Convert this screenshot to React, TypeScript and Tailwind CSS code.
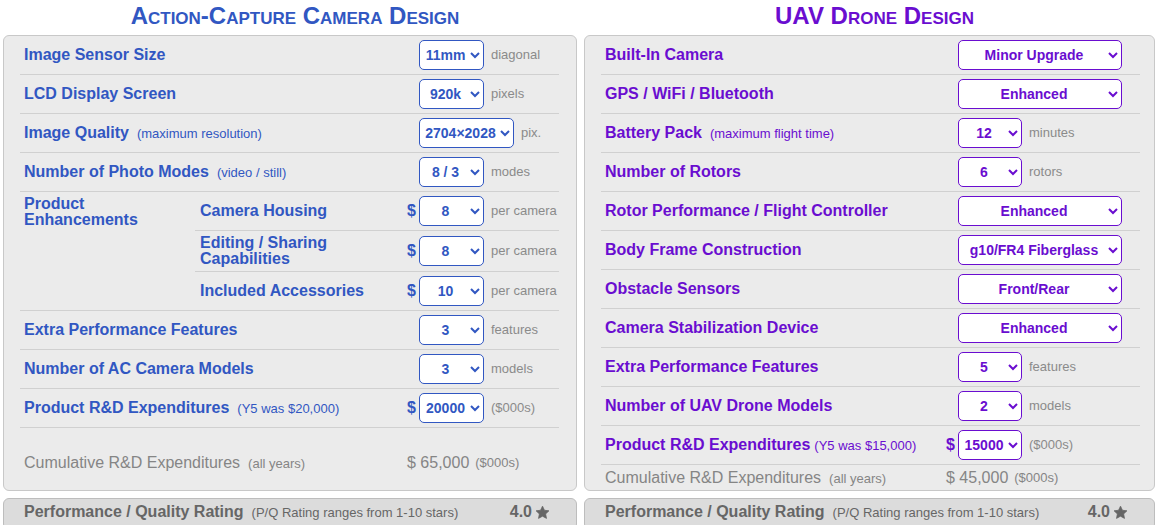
import React from 'react';

type Theme = { text: string; border: string };

const BLUE: Theme = { text: 'text-[#3157c2]', border: 'border-[#3157c2]' };
const PURPLE: Theme = { text: 'text-[#6a0dd0]', border: 'border-[#6a0dd0]' };

function Picker({ value, width, theme }: { value: string; width: string; theme: Theme }) {
    return (
        <select
            defaultValue={value}
            className={`h-[30px] ${width} rounded-[5px] border ${theme.border} bg-white text-[14px] font-bold ${theme.text} [text-align-last:center] outline-none`}
        >
            <option value={value}>{value}</option>
        </select>
    );
}

type RowProps = {
    label: string;
    note?: string;
    value: string;
    unit?: string;
    dollar?: boolean;
    selWidth: string;
    labelWidth: string;
    theme: Theme;
    noteGap?: string;
    height?: string;
    border?: boolean;
    labelPad?: string;
};

function Row({ label, note, value, unit, dollar, selWidth, labelWidth, theme, noteGap = 'ml-2', height = 'h-[39px]', border = true, labelPad = 'pl-1' }: RowProps) {
    return (
        <div className={`flex items-center ${height} ${border ? 'border-b border-[#d0d0d0]' : ''}`}>
            <div className={`${labelWidth} ${labelPad} shrink-0 leading-4`}>
                <span className={`text-[16px] font-bold ${theme.text}`}>{label}</span>
                {note && <span className={`${noteGap} text-[13px] ${theme.text}`}>{note}</span>}
            </div>
            <div className={`w-[12px] shrink-0 text-[16px] font-bold ${theme.text}`}>{dollar ? '$' : ''}</div>
            <Picker value={value} width={selWidth} theme={theme} />
            {unit && <span className="ml-[7px] text-[13px] text-[#8a8a8a]">{unit}</span>}
        </div>
    );
}

function Star() {
    return (
        <svg width="15" height="15" viewBox="0 0 24 24" className="ml-[3px] inline-block">
            <path
                d="M12 1.8l3.1 6.6 7.2.9-5.3 5 1.4 7.1L12 17.9l-6.4 3.5 1.4-7.1-5.3-5 7.2-.9z"
                fill="#666666"
                stroke="#666666"
                strokeWidth="1.2"
                strokeLinejoin="round"
            />
        </svg>
    );
}

function RatingBar() {
    return (
        <div className="mt-[7px] flex h-[32px] items-start rounded-md border border-[#bdbdbd] bg-[#dcdcdc] pt-[4px] pl-5 pr-[26px] leading-[18px] text-[#666666]">
            <span className="text-[16px] font-bold">Performance / Quality Rating</span>
            <span className="ml-2 pt-[1px] text-[13px]">(P/Q Rating ranges from 1-10 stars)</span>
            <span className="ml-auto flex items-center text-[16px] font-bold">
                4.0
                <Star />
            </span>
        </div>
    );
}

function CameraPanel() {
    const t = BLUE;
    const lw = 'w-[387px]';
    return (
        <div>
            <h2 className={`flex h-[35px] items-center justify-center pl-[10px] pb-[4px] text-[24px] font-bold [font-variant:small-caps] ${t.text}`}>
                Action-Capture Camera Design
            </h2>
            <div className="flex h-[456px] flex-col rounded-md border border-[#c8c8c8] bg-[#ebebeb] pl-4 pr-[17px]">
                <Row label="Image Sensor Size" value="11mm" unit="diagonal" selWidth="w-[65px]" labelWidth={lw} theme={t} />
                <Row label="LCD Display Screen" value="920k" unit="pixels" selWidth="w-[65px]" labelWidth={lw} theme={t} />
                <Row label="Image Quality" note="(maximum resolution)" value="2704×2028" unit="pix." selWidth="w-[95px]" labelWidth={lw} theme={t} />
                <Row label="Number of Photo Modes" note="(video / still)" value="8 / 3" unit="modes" selWidth="w-[65px]" labelWidth={lw} theme={t} />

                {/* Product Enhancements group */}
                <div className="flex border-b border-[#d0d0d0]">
                    <div className={`w-[175px] shrink-0 pl-1 pt-[4px] text-[16px] font-bold leading-4 ${t.text}`}>
                        Product
                        <br />
                        Enhancements
                    </div>
                    <div className="flex flex-1 flex-col">
                        <Row label="Camera Housing" value="8" unit="per camera" dollar selWidth="w-[65px]" labelWidth="w-[212px]" labelPad="pl-[5px]" theme={t} />
                        <Row label="Editing / Sharing Capabilities" value="8" unit="per camera" dollar selWidth="w-[65px]" labelWidth="w-[212px]" labelPad="pl-[5px] pr-[50px]" height="h-[41px]" theme={t} />
                        <Row label="Included Accessories" value="10" unit="per camera" dollar selWidth="w-[65px]" labelWidth="w-[212px]" labelPad="pl-[5px]" height="h-[38px]" border={false} theme={t} />
                    </div>
                </div>

                <Row label="Extra Performance Features" value="3" unit="features" selWidth="w-[65px]" labelWidth={lw} theme={t} />
                <Row label="Number of AC Camera Models" value="3" unit="models" selWidth="w-[65px]" labelWidth={lw} theme={t} />
                <Row label="Product R&D Expenditures" note="(Y5 was $20,000)" value="20000" unit="($000s)" dollar selWidth="w-[65px]" labelWidth={lw} theme={t} />

                <div className="flex flex-1 items-center pt-[8px] text-[#858585]">
                    <div className="w-[387px] pl-1">
                        <span className="text-[16px]">Cumulative R&amp;D Expenditures</span>
                        <span className="ml-2 text-[13px]">(all years)</span>
                    </div>
                    <span className="text-[16px]">$ 65,000</span>
                    <span className="ml-[6px] text-[13px]">($000s)</span>
                </div>
            </div>
            <RatingBar />
        </div>
    );
}

function DronePanel() {
    const t = PURPLE;
    const lw = 'w-[345px]';
    const wide = 'w-[164px]';
    const narrow = 'w-[64px]';
    return (
        <div>
            <h2 className={`flex h-[35px] items-center justify-center pl-[10px] pb-[4px] text-[24px] font-bold [font-variant:small-caps] ${t.text}`}>
                UAV Drone Design
            </h2>
            <div className="flex h-[456px] flex-col rounded-md border border-[#c8c8c8] bg-[#ebebeb] pl-4 pr-[14px]">
                <Row label="Built-In Camera" value="Minor Upgrade" selWidth={wide} labelWidth={lw} theme={t} />
                <Row label="GPS / WiFi / Bluetooth" value="Enhanced" selWidth={wide} labelWidth={lw} theme={t} />
                <Row label="Battery Pack" note="(maximum flight time)" value="12" unit="minutes" selWidth={narrow} labelWidth={lw} theme={t} />
                <Row label="Number of Rotors" value="6" unit="rotors" selWidth={narrow} labelWidth={lw} theme={t} />
                <Row label="Rotor Performance / Flight Controller" value="Enhanced" selWidth={wide} labelWidth={lw} theme={t} />
                <Row label="Body Frame Construction" value="g10/FR4 Fiberglass" selWidth={wide} labelWidth={lw} theme={t} />
                <Row label="Obstacle Sensors" value="Front/Rear" selWidth={wide} labelWidth={lw} theme={t} />
                <Row label="Camera Stabilization Device" value="Enhanced" selWidth={wide} labelWidth={lw} theme={t} />
                <Row label="Extra Performance Features" value="5" unit="features" selWidth={narrow} labelWidth={lw} theme={t} />
                <Row label="Number of UAV Drone Models" value="2" unit="models" selWidth={narrow} labelWidth={lw} theme={t} />
                <Row label="Product R&D Expenditures" note="(Y5 was $15,000)" noteGap="ml-1" value="15000" unit="($000s)" dollar selWidth={narrow} labelWidth={lw} theme={t} />

                <div className="flex flex-1 items-center text-[#858585]">
                    <div className="w-[345px] pl-1">
                        <span className="text-[16px]">Cumulative R&amp;D Expenditures</span>
                        <span className="ml-2 text-[13px]">(all years)</span>
                    </div>
                    <span className="text-[16px]">$ 45,000</span>
                    <span className="ml-[6px] text-[13px]">($000s)</span>
                </div>
            </div>
            <RatingBar />
        </div>
    );
}

export default function App() {
    return (
        <div className="h-[525px] w-[1157px] overflow-hidden bg-white font-['Liberation_Sans',Arial,sans-serif]">
            <div className="grid grid-cols-[574px_571px] gap-[7px] pl-[3px]">
                <CameraPanel />
                <DronePanel />
            </div>
        </div>
    );
}
